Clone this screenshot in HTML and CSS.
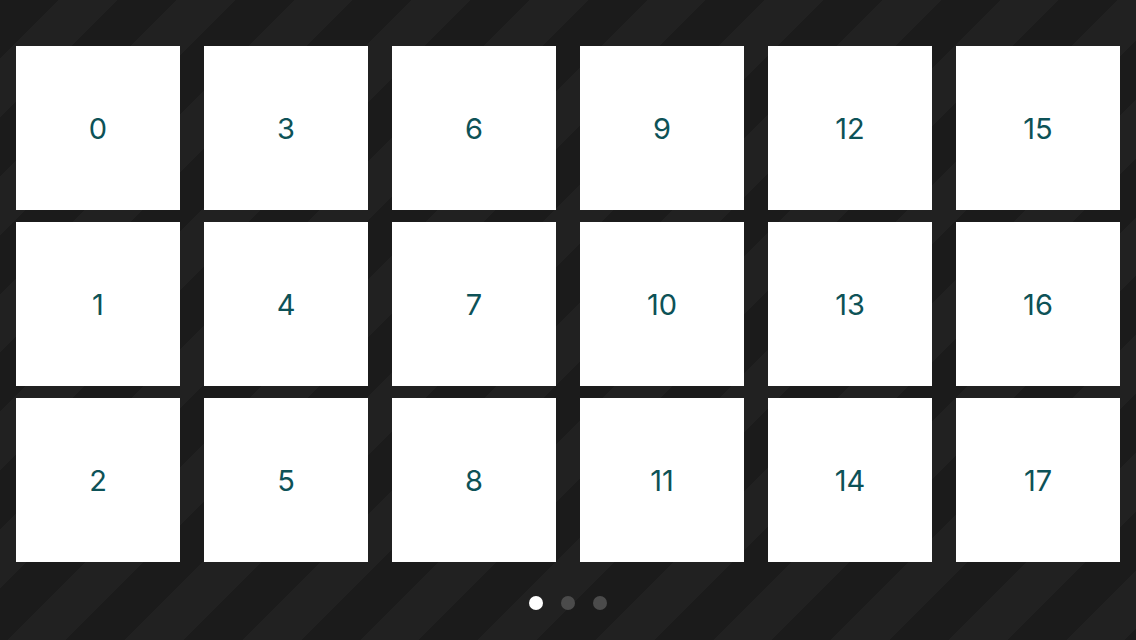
FILE: index.html
```html
<!DOCTYPE html>
<html>
<head>
<meta charset="utf-8">
<link rel="stylesheet" href="styles.css">
</head>
<body>
<div class="page">
  <div class="grid">
    <div class="tile">0</div>
    <div class="tile">3</div>
    <div class="tile">6</div>
    <div class="tile">9</div>
    <div class="tile">12</div>
    <div class="tile">15</div>
    <div class="tile">1</div>
    <div class="tile">4</div>
    <div class="tile">7</div>
    <div class="tile">10</div>
    <div class="tile">13</div>
    <div class="tile">16</div>
    <div class="tile">2</div>
    <div class="tile">5</div>
    <div class="tile">8</div>
    <div class="tile">11</div>
    <div class="tile">14</div>
    <div class="tile">17</div>
  </div>
  <div class="dots">
    <span class="dot active"></span>
    <span class="dot"></span>
    <span class="dot"></span>
  </div>
</div>
</body>
</html>
```

FILE: styles.css
```css
html, body {
  margin: 0;
  padding: 0;
  width: 100%;
  height: 100%;
}
body {
  background: repeating-linear-gradient(135deg, #1b1b1b 0 41.6px, #212121 41.6px 83.2px);
  font-family: Inter, "Noto Sans", sans-serif;
  overflow: hidden;
}
.page {
  display: flex;
  flex-direction: column;
  align-items: center;
  padding-top: 46px;
}
.grid {
  display: grid;
  grid-template-columns: repeat(6, 164px);
  grid-auto-rows: 164px;
  column-gap: 24px;
  row-gap: 12px;
}
.tile {
  background: #ffffff;
  display: flex;
  align-items: center;
  justify-content: center;
  color: #0d5257;
  font-size: 29px;
  font-weight: 400;
}
.dots {
  display: flex;
  gap: 18px;
  margin-top: 34px;
}
.dot {
  width: 14px;
  height: 14px;
  border-radius: 50%;
  background: #4b4b4b;
}
.dot.active {
  background: #ffffff;
}
```
